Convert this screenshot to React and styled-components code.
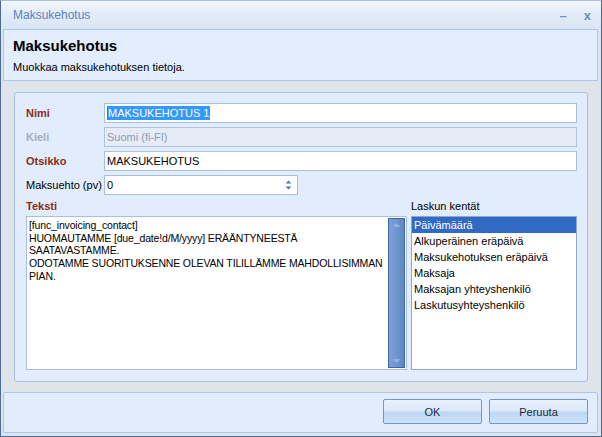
import React from 'react';
import styled, { createGlobalStyle } from 'styled-components';

const GlobalStyle = createGlobalStyle`
  html, body {
    margin: 0;
    padding: 0;
    background: #ffffff;
  }
  body {
    font-family: "Liberation Sans", Arial, sans-serif;
    font-size: 11px;
    color: #000;
  }
`;

const fields = [
  'Päivämäärä',
  'Alkuperäinen eräpäivä',
  'Maksukehotuksen eräpäivä',
  'Maksaja',
  'Maksajan yhteyshenkilö',
  'Laskutusyhteyshenkilö',
];

const textLines = [
  '[func_invoicing_contact]',
  'HUOMAUTAMME [due_date!d/M/yyyy] ERÄÄNTYNEESTÄ',
  'SAATAVASTAMME.',
  'ODOTAMME SUORITUKSENNE OLEVAN TILILLÄMME MAHDOLLISIMMAN',
  'PIAN.',
];

const App = () => {
  return (
    <>
      <GlobalStyle />
      <Window>
        <TitleBar>
          <Title>Maksukehotus</Title>
          <Controls>
            <Ctrl>–</Ctrl>
            <Ctrl>x</Ctrl>
          </Controls>
        </TitleBar>

        <HeaderPanel>
          <HeaderTitle>Maksukehotus</HeaderTitle>
          <HeaderSub>Muokkaa maksukehotuksen tietoja.</HeaderSub>
        </HeaderPanel>

        <Body>
          <MainPanel>
            <FormRow>
              <Label tone="required">Nimi</Label>
              <Input>
                <Caret />
                <Selected>MAKSUKEHOTUS 1</Selected>
              </Input>
            </FormRow>
            <FormRow>
              <Label tone="disabled">Kieli</Label>
              <Input disabled>Suomi (fi-FI)</Input>
            </FormRow>
            <FormRow>
              <Label tone="required">Otsikko</Label>
              <Input>MAKSUKEHOTUS</Input>
            </FormRow>
            <FormRow>
              <Label>Maksuehto (pv)</Label>
              <Input width={194}>
                <SpinValue>0</SpinValue>
                <Spinner>
                  <svg width="7" height="12" viewBox="0 0 7 12">
                    <path d="M0.5 4.5 L3.5 1.5 L6.5 4.5 Z" fill="#4d7cc2" />
                    <path d="M0.5 7.5 L3.5 10.5 L6.5 7.5 Z" fill="#4d7cc2" />
                  </svg>
                </Spinner>
              </Input>
            </FormRow>

            <Lower>
              <Column>
                <Label tone="required">Teksti</Label>
                <TextBox>
                  <TextContent>
                    {textLines.map((line, i) => (
                      <div key={i}>{line}</div>
                    ))}
                  </TextContent>
                  <ScrollBar>
                    <svg width="15" height="10" viewBox="0 0 15 10">
                      <path d="M3.5 7 L7.5 3 L11.5 7 Z" fill="#93b3df" />
                    </svg>
                    <svg width="15" height="10" viewBox="0 0 15 10">
                      <path d="M3.5 3 L7.5 7 L11.5 3 Z" fill="#93b3df" />
                    </svg>
                  </ScrollBar>
                </TextBox>
              </Column>
              <Column>
                <Label>Laskun kentät</Label>
                <ListBox>
                  {fields.map((f, i) => (
                    <ListItem key={f} selected={i === 0}>
                      {f}
                    </ListItem>
                  ))}
                </ListBox>
              </Column>
            </Lower>
          </MainPanel>
        </Body>

        <Footer>
          <Button>OK</Button>
          <Button>Peruuta</Button>
        </Footer>
      </Window>
    </>
  );
};

const Window = styled.div`
  width: 602px;
  height: 437px;
  box-sizing: border-box;
  border: 1px solid #4b6b9c;
  border-top-color: #a9bfdf;
  background: #dfe3ea;
  display: flex;
  flex-direction: column;
  padding: 0 3px 3px 2px;
  overflow: hidden;
`;

const TitleBar = styled.div`
  height: 28px;
  margin: 0 -3px 0 -2px;
  padding: 0 10px 0 12px;
  display: flex;
  align-items: center;
  justify-content: space-between;
  background: linear-gradient(#f3f7fd 0%, #e4edf9 40%, #d9e5f6 100%);
  flex-shrink: 0;
`;

const Title = styled.div`
  font-size: 12px;
  color: #5d82bc;
`;

const Controls = styled.div`
  display: flex;
  gap: 17px;
  align-items: center;
`;

const Ctrl = styled.span`
  font-size: 13px;
  font-weight: 700;
  color: #6e8fc1;
`;

const HeaderPanel = styled.div`
  height: 52px;
  box-sizing: border-box;
  background: #e2edfd;
  border: 1px solid #aac6ec;
  padding: 7px 0 0 9px;
  flex-shrink: 0;
`;

const HeaderTitle = styled.div`
  font-size: 15px;
  font-weight: 700;
  line-height: 18px;
`;

const HeaderSub = styled.div`
  font-size: 11px;
  line-height: 14px;
  margin-top: 5px;
`;

const Body = styled.div`
  flex: 1;
  min-height: 0;
  padding: 11px 10px 10px 11px;
  display: flex;
`;

const MainPanel = styled.div`
  flex: 1;
  min-height: 0;
  box-sizing: border-box;
  border: 1px solid #a6c0e6;
  border-radius: 3px;
  background: #e1ecfc;
  padding: 10px 10px 11px 11px;
  display: flex;
  flex-direction: column;
  gap: 4px;
`;

const FormRow = styled.div`
  display: flex;
  align-items: center;
  height: 20px;
  flex-shrink: 0;
`;

const labelColors = {
  required: '#8c2c18',
  disabled: '#a4aebd',
};

const Label = styled.div`
  width: 78px;
  flex-shrink: 0;
  font-size: 11px;
  line-height: 14px;
  font-weight: ${({ tone }) => (tone ? 700 : 400)};
  color: ${({ tone }) => labelColors[tone] || '#000'};
  white-space: nowrap;
`;

const Input = styled.div`
  ${({ width }) => (width ? `width: ${width}px;` : 'flex: 1;')}
  height: 20px;
  box-sizing: border-box;
  border: 1px solid ${({ disabled }) => (disabled ? '#b0c2dc' : '#a9bfe0')};
  background: ${({ disabled }) => (disabled ? '#e6ecf6' : '#ffffff')};
  color: ${({ disabled }) => (disabled ? '#8e9bb0' : '#000')};
  padding: 0 2px;
  display: flex;
  align-items: center;
  font-size: 11px;
  white-space: nowrap;
`;

const Caret = styled.span`
  width: 1px;
  height: 14px;
  background: #c0522a;
`;

const Selected = styled.span`
  background: #3399ff;
  color: #fff;
  line-height: 14px;
  padding-right: 1px;
`;

const SpinValue = styled.span`
  flex: 1;
`;

const Spinner = styled.span`
  display: flex;
  align-items: center;
  margin-right: 3px;
`;

const Lower = styled.div`
  flex: 1;
  min-height: 0;
  display: grid;
  grid-template-columns: 381px 1fr;
  column-gap: 4px;
`;

const Column = styled.div`
  display: flex;
  flex-direction: column;
  gap: 3px;
  min-height: 0;

  & > ${Label} {
    width: auto;
  }
`;

const TextBox = styled.div`
  flex: 1;
  min-height: 0;
  display: flex;
  box-sizing: border-box;
  border: 1px solid #a9bfe0;
  background: #fff;
  padding: 1px;
`;

const TextContent = styled.div`
  flex: 1;
  min-width: 0;
  padding: 1px 1px;
  font-size: 10.5px;
  line-height: 12.7px;
  letter-spacing: -0.15px;
  white-space: nowrap;
  overflow: hidden;
`;

const ScrollBar = styled.div`
  width: 17px;
  flex-shrink: 0;
  box-sizing: border-box;
  border: 1px solid #3d63a4;
  background: linear-gradient(90deg, #7aa0d6, #6b93cd 60%, #5d87c4);
  display: flex;
  flex-direction: column;
  justify-content: space-between;
  padding: 1px 0;
`;

const ListBox = styled.div`
  flex: 1;
  min-height: 0;
  box-sizing: border-box;
  border: 1px solid #8ea8cf;
  background: #fff;
`;

const ListItem = styled.div`
  height: 16px;
  line-height: 16px;
  padding-left: 2px;
  font-size: 11px;
  white-space: nowrap;
  background: ${({ selected }) => (selected ? '#316ac5' : 'transparent')};
  color: ${({ selected }) => (selected ? '#fff' : '#000')};
`;

const Footer = styled.div`
  height: 41px;
  box-sizing: border-box;
  border: 1px solid #aac6ec;
  border-radius: 2px;
  background: #e1ecfc;
  display: flex;
  justify-content: flex-end;
  align-items: flex-start;
  gap: 7px;
  padding: 6px 9px 0 0;
  flex-shrink: 0;
`;

const Button = styled.div`
  width: 99px;
  height: 25px;
  box-sizing: border-box;
  border: 1px solid #7097cc;
  border-radius: 2px;
  background: linear-gradient(#e9f2fd 0%, #dbe9fa 45%, #bcd7f4 55%, #cfe2f8 100%);
  display: flex;
  align-items: center;
  justify-content: center;
  font-size: 11px;
  color: #1b2a3d;
`;

export default App;
